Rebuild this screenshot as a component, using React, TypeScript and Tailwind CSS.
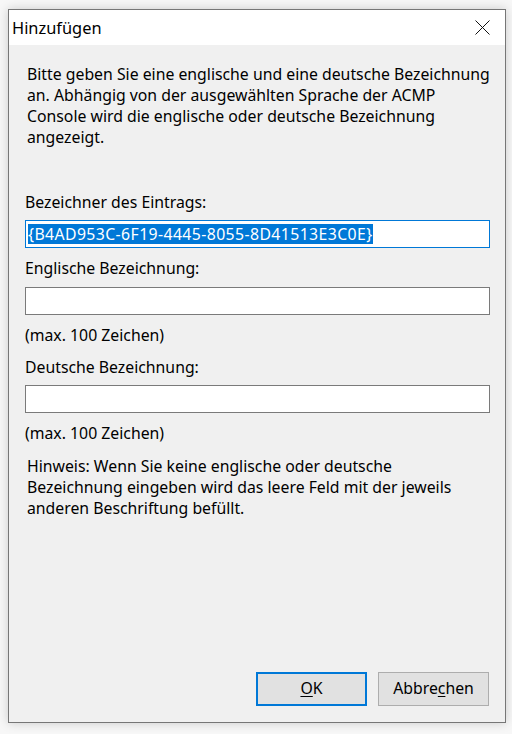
const font = { fontFamily: '"Noto Sans", "Liberation Sans", sans-serif' };

const Label = ({ children, className = "" }: { children: React.ReactNode; className?: string }) => (
  <div className={`pl-[16px] h-[21px] leading-[21px] whitespace-nowrap ${className}`}>{children}</div>
);

export default function App() {
  return (
    <div className="w-[512px] h-[734px] bg-[#f7f7f7] pt-[9px] pl-[8px] text-[15.8px] text-black" style={font}>
      <div className="w-[498px] h-[714px] flex flex-col border border-[#767676] bg-[#f0f0f0] shadow-[0_0_10px_rgba(0,0,0,0.18)]">
        {/* Title bar */}
        <div className="h-[35px] bg-white flex items-center justify-between pl-[3px] pr-[15px]">
          <span className="leading-[21px] text-[16.4px]">Hinzufügen</span>
          <svg width="15" height="15" viewBox="0 0 15 15" className="block">
            <path d="M0.5 0.5 L14.5 14.5 M14.5 0.5 L0.5 14.5" stroke="#111" strokeWidth="1" fill="none" />
          </svg>
        </div>

        {/* Intro */}
        <div className="mt-[19px] pl-[18px] leading-[21px] whitespace-nowrap">
          <div>Bitte geben Sie eine englische und eine deutsche Bezeichnung</div>
          <div>an. Abhängig von der ausgewählten Sprache der ACMP</div>
          <div>Console wird die englische oder deutsche Bezeichnung</div>
          <div>angezeigt.</div>
        </div>

        <Label className="mt-[44px]">Bezeichner des Eintrags:</Label>
        <div className="ml-[16px] mt-[7px] w-[465px] h-[28px] bg-white border border-[#0078d7] flex items-center pl-[2px]">
          <span className="bg-[#0078d7] text-white leading-[20px] whitespace-nowrap tracking-[0.4px]">{"{B4AD953C-6F19-4445-8055-8D41513E3C0E}"}</span>
        </div>

        <Label className="mt-[10px]">Englische Bezeichnung:</Label>
        <div className="ml-[16px] mt-[8px] w-[465px] h-[28px] bg-white border border-[#7a7a7a]" />
        <Label className="mt-[10px]">(max. 100 Zeichen)</Label>

        <Label className="mt-[11px]">Deutsche Bezeichnung:</Label>
        <div className="ml-[16px] mt-[7px] w-[465px] h-[28px] bg-white border border-[#7a7a7a]" />
        <Label className="mt-[10px]">(max. 100 Zeichen)</Label>

        <div className="mt-[12px] pl-[18px] leading-[21px] whitespace-nowrap">
          <div>Hinweis: Wenn Sie keine englische oder deutsche</div>
          <div>Bezeichnung eingeben wird das leere Feld mit der jeweils</div>
          <div>anderen Beschriftung befüllt.</div>
        </div>

        <div className="flex-1" />

        {/* Buttons */}
        <div className="flex justify-end gap-[11px] pr-[16px] pb-[16px]">
          <button className="w-[111px] h-[34px] bg-[#e1e1e1] border-2 border-[#0078d7] leading-none">
            <span className="underline underline-offset-2">O</span>K
          </button>
          <button className="w-[111px] h-[34px] bg-[#e1e1e1] border border-[#adadad] leading-none">
            Abbre<span className="underline underline-offset-2">c</span>hen
          </button>
        </div>
      </div>
    </div>
  );
}
